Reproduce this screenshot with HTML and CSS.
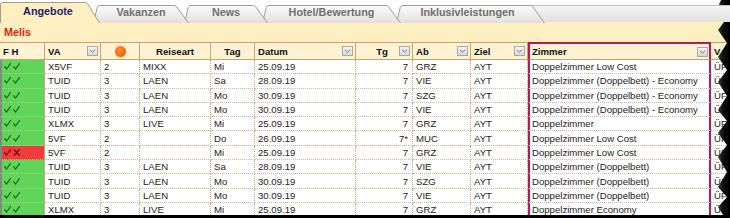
FILE: index.html
```html
<!DOCTYPE html>
<html lang="de">
<head>
<meta charset="utf-8">
<title>Angebote</title>
<link rel="stylesheet" href="styles.css">
</head>
<body>
<svg class="defs" width="0" height="0" aria-hidden="true">
  <defs>
    <linearGradient id="tabGrad" x1="0" y1="0" x2="0" y2="1">
      <stop offset="0" stop-color="#fbfbfb"/>
      <stop offset="1" stop-color="#e1e1e1"/>
    </linearGradient>
    <linearGradient id="tornGrad" x1="0" y1="0" x2="1" y2="0">
      <stop offset="0" stop-color="#3a3a3a"/>
      <stop offset="0.5" stop-color="#0c0c0c"/>
      <stop offset="1" stop-color="#000"/>
    </linearGradient>
  </defs>
</svg>
<div class="screen">
  <div class="tabs">
    <div class="tab active t-angebote">
      <svg class="shape" viewBox="0 0 100 22"><path d="M0.5 23 V4.5 Q0.5 2.5 2.5 2.5 H85 Q86.8 2.5 87.8 4 L99.5 23"/></svg>
      <span>Angebote</span>
    </div>
    <div class="tab t-vakanzen">
      <svg class="shape" viewBox="0 0 96 22"><path d="M0.5 23 L4.2 7.5 Q4.8 5.5 7 5.5 H81 Q82.8 5.5 83.8 7 L95.5 23"/></svg>
      <span>Vakanzen</span>
    </div>
    <div class="tab t-news">
      <svg class="shape" viewBox="0 0 84 22"><path d="M0.5 23 L4.2 7.5 Q4.8 5.5 7 5.5 H69 Q70.8 5.5 71.8 7 L83.5 23"/></svg>
      <span>News</span>
    </div>
    <div class="tab t-hotel">
      <svg class="shape" viewBox="0 0 139 22"><path d="M0.5 23 L4.2 7.5 Q4.8 5.5 7 5.5 H124 Q125.8 5.5 126.8 7 L138.5 23"/></svg>
      <span>Hotel/Bewertung</span>
    </div>
    <div class="tab t-inkl">
      <svg class="shape" viewBox="0 0 149 22"><path d="M0.5 23 L4.2 7.5 Q4.8 5.5 7 5.5 H134 Q135.8 5.5 136.8 7 L148.5 23"/></svg>
      <span>Inklusivleistungen</span>
    </div>
    <div class="tab-fill"></div>
  </div>

  <div class="band">Melis</div>

  <div class="grid">
    <div class="row head">
      <div class="cell">F H</div>
      <div class="cell"><span class="lbl">VA</span><span class="dd"><svg viewBox="0 0 7 4"><path d="M0.8 0.6 L3.5 3.2 L6.2 0.6"/></svg></span></div>
      <div class="cell center"><span class="dot"></span></div>
      <div class="cell center">Reiseart</div>
      <div class="cell center">Tag</div>
      <div class="cell"><span class="lbl">Datum</span><span class="dd"><svg viewBox="0 0 7 4"><path d="M0.8 0.6 L3.5 3.2 L6.2 0.6"/></svg></span></div>
      <div class="cell"><span class="lbl mid">Tg</span><span class="dd"><svg viewBox="0 0 7 4"><path d="M0.8 0.6 L3.5 3.2 L6.2 0.6"/></svg></span></div>
      <div class="cell"><span class="lbl">Ab</span><span class="dd"><svg viewBox="0 0 7 4"><path d="M0.8 0.6 L3.5 3.2 L6.2 0.6"/></svg></span></div>
      <div class="cell"><span class="lbl">Ziel</span><span class="dd"><svg viewBox="0 0 7 4"><path d="M0.8 0.6 L3.5 3.2 L6.2 0.6"/></svg></span></div>
      <div class="cell zimmer"><span class="lbl">Zimmer</span><span class="dd"><svg viewBox="0 0 7 4"><path d="M0.8 0.6 L3.5 3.2 L6.2 0.6"/></svg></span></div>
      <div class="cell">V</div>
    </div>

    <div class="row">
      <div class="cell st ok"><svg class="marks" viewBox="0 0 18 7"><path d="M0.6 3.6 L2.6 6 L6.4 0.6 M9.6 3.6 L11.6 6 L15.4 0.6"/></svg></div>
      <div class="cell">X5VF</div><div class="cell">2</div><div class="cell">MIXX</div><div class="cell">Mi</div><div class="cell">25.09.19</div><div class="cell num">7</div><div class="cell">GRZ</div><div class="cell">AYT</div><div class="cell zimmer">Doppelzimmer Low Cost</div><div class="cell">ÜF</div>
    </div>
    <div class="row">
      <div class="cell st ok"><svg class="marks" viewBox="0 0 18 7"><path d="M0.6 3.6 L2.6 6 L6.4 0.6 M9.6 3.6 L11.6 6 L15.4 0.6"/></svg></div>
      <div class="cell">TUID</div><div class="cell">3</div><div class="cell">LAEN</div><div class="cell">Sa</div><div class="cell">28.09.19</div><div class="cell num">7</div><div class="cell">VIE</div><div class="cell">AYT</div><div class="cell zimmer">Doppelzimmer (Doppelbett) - Economy</div><div class="cell">ÜF</div>
    </div>
    <div class="row">
      <div class="cell st ok"><svg class="marks" viewBox="0 0 18 7"><path d="M0.6 3.6 L2.6 6 L6.4 0.6 M9.6 3.6 L11.6 6 L15.4 0.6"/></svg></div>
      <div class="cell">TUID</div><div class="cell">3</div><div class="cell">LAEN</div><div class="cell">Mo</div><div class="cell">30.09.19</div><div class="cell num">7</div><div class="cell">SZG</div><div class="cell">AYT</div><div class="cell zimmer">Doppelzimmer (Doppelbett) - Economy</div><div class="cell">ÜF</div>
    </div>
    <div class="row">
      <div class="cell st ok"><svg class="marks" viewBox="0 0 18 7"><path d="M0.6 3.6 L2.6 6 L6.4 0.6 M9.6 3.6 L11.6 6 L15.4 0.6"/></svg></div>
      <div class="cell">TUID</div><div class="cell">3</div><div class="cell">LAEN</div><div class="cell">Mo</div><div class="cell">30.09.19</div><div class="cell num">7</div><div class="cell">VIE</div><div class="cell">AYT</div><div class="cell zimmer">Doppelzimmer (Doppelbett) - Economy</div><div class="cell">ÜF</div>
    </div>
    <div class="row">
      <div class="cell st ok"><svg class="marks" viewBox="0 0 18 7"><path d="M0.6 3.6 L2.6 6 L6.4 0.6 M9.6 3.6 L11.6 6 L15.4 0.6"/></svg></div>
      <div class="cell">XLMX</div><div class="cell">3</div><div class="cell">LIVE</div><div class="cell">Mi</div><div class="cell">25.09.19</div><div class="cell num">7</div><div class="cell">GRZ</div><div class="cell">AYT</div><div class="cell zimmer">Doppelzimmer</div><div class="cell">ÜF</div>
    </div>
    <div class="row">
      <div class="cell st ok"><svg class="marks" viewBox="0 0 18 7"><path d="M0.6 3.6 L2.6 6 L6.4 0.6 M9.6 3.6 L11.6 6 L15.4 0.6"/></svg></div>
      <div class="cell">5VF</div><div class="cell">2</div><div class="cell"></div><div class="cell">Do</div><div class="cell">26.09.19</div><div class="cell num">7*</div><div class="cell">MUC</div><div class="cell">AYT</div><div class="cell zimmer">Doppelzimmer Low Cost</div><div class="cell">ÜF</div>
    </div>
    <div class="row">
      <div class="cell st bad"><svg class="marks" viewBox="0 0 18 7"><path d="M0.6 3.6 L2.6 6 L6.4 0.6"/><path class="x" d="M10.2 0.8 L15.2 6.2 M15.2 0.8 L10.2 6.2"/></svg></div>
      <div class="cell">5VF</div><div class="cell">2</div><div class="cell"></div><div class="cell">Mi</div><div class="cell">25.09.19</div><div class="cell num">7</div><div class="cell">GRZ</div><div class="cell">AYT</div><div class="cell zimmer">Doppelzimmer Low Cost</div><div class="cell">ÜF</div>
    </div>
    <div class="row">
      <div class="cell st ok"><svg class="marks" viewBox="0 0 18 7"><path d="M0.6 3.6 L2.6 6 L6.4 0.6 M9.6 3.6 L11.6 6 L15.4 0.6"/></svg></div>
      <div class="cell">TUID</div><div class="cell">3</div><div class="cell">LAEN</div><div class="cell">Sa</div><div class="cell">28.09.19</div><div class="cell num">7</div><div class="cell">VIE</div><div class="cell">AYT</div><div class="cell zimmer">Doppelzimmer (Doppelbett)</div><div class="cell">ÜF</div>
    </div>
    <div class="row">
      <div class="cell st ok"><svg class="marks" viewBox="0 0 18 7"><path d="M0.6 3.6 L2.6 6 L6.4 0.6 M9.6 3.6 L11.6 6 L15.4 0.6"/></svg></div>
      <div class="cell">TUID</div><div class="cell">3</div><div class="cell">LAEN</div><div class="cell">Mo</div><div class="cell">30.09.19</div><div class="cell num">7</div><div class="cell">SZG</div><div class="cell">AYT</div><div class="cell zimmer">Doppelzimmer (Doppelbett)</div><div class="cell">ÜF</div>
    </div>
    <div class="row">
      <div class="cell st ok"><svg class="marks" viewBox="0 0 18 7"><path d="M0.6 3.6 L2.6 6 L6.4 0.6 M9.6 3.6 L11.6 6 L15.4 0.6"/></svg></div>
      <div class="cell">TUID</div><div class="cell">3</div><div class="cell">LAEN</div><div class="cell">Mo</div><div class="cell">30.09.19</div><div class="cell num">7</div><div class="cell">VIE</div><div class="cell">AYT</div><div class="cell zimmer">Doppelzimmer (Doppelbett)</div><div class="cell">ÜF</div>
    </div>
    <div class="row last">
      <div class="cell st ok"><svg class="marks" viewBox="0 0 18 7"><path d="M0.6 3.6 L2.6 6 L6.4 0.6 M9.6 3.6 L11.6 6 L15.4 0.6"/></svg></div>
      <div class="cell">XLMX</div><div class="cell">3</div><div class="cell">LIVE</div><div class="cell">Mi</div><div class="cell">25.09.19</div><div class="cell num">7</div><div class="cell">GRZ</div><div class="cell">AYT</div><div class="cell zimmer">Doppelzimmer Economy</div><div class="cell">ÜF</div>
    </div>
  </div>

  <svg class="torn-right" viewBox="0 0 14 218" preserveAspectRatio="none" aria-hidden="true">
    <path d="M14 0 L5 0 L1.5 8 L11 18 L2 30 L11 43 L2 57 L11 70 L2 82 L11 96 L2 110 L11 121 L2 133 L11 145 L2 157 L11 172 L2 187 L11 197 L2 207 L9 218 L14 218 Z"/>
  </svg>
  <div class="torn-bottom"></div>
</div>
</body>
</html>
```

FILE: styles.css
```css
html, body {
  margin: 0;
  padding: 0;
  background: #ffffff;
}

body {
  font-family: "Liberation Sans", Arial, sans-serif;
  color: #1c1c1c;
}

.defs {
  position: absolute;
  width: 0;
  height: 0;
}

.screen {
  position: relative;
  width: 730px;
  height: 218px;
  overflow: hidden;
  background: #ffffff;
}

/* ---------- tabs ---------- */
.tabs {
  display: flex;
  height: 22px;
}

.tab {
  position: relative;
  flex: none;
  display: flex;
  align-items: center;
  justify-content: center;
  font-weight: bold;
  font-size: 10.8px;
  color: #6e6e6e;
  padding-top: 2px;
  box-sizing: border-box;
}

.tab .shape {
  position: absolute;
  left: 0;
  top: 0;
  width: 100%;
  height: 100%;
  overflow: visible;
}

.tab .shape path {
  fill: url(#tabGrad);
  stroke: #9d9d9d;
  stroke-width: 1;
}

.tab span {
  position: relative;
}

.tab.active {
  color: #1d1d6b;
  padding-top: 0;
}

.tab.active .shape path {
  fill: #fdefbf;
  stroke: #a49c88;
}

.t-angebote { width: 100px; z-index: 6; padding-right: 4px; }
.t-vakanzen { width: 96px; margin-left: -7px; z-index: 5; }
.t-news { width: 84px; margin-left: -5px; z-index: 4; }
.t-hotel { width: 139px; margin-left: -6px; z-index: 3; }
.t-inkl { width: 149px; margin-left: -5px; z-index: 2; padding-right: 6px; }

.tab-fill {
  flex: 1;
  margin-left: -14px;
  margin-top: 5px;
  border-top: 1px solid #c2c2c2;
  background: linear-gradient(#f4f4f4, #e1e1e1);
  z-index: 1;
}

/* ---------- band ---------- */
.band {
  height: 20px;
  background: #fdefbf;
  display: flex;
  align-items: center;
  padding-left: 4px;
  color: #e2230f;
  font-weight: bold;
  font-size: 10.8px;
}

/* ---------- grid ---------- */
.row {
  display: grid;
  grid-template-columns: 45px 56px 39px 71px 44px 101px 57px 58px 57px 183px 1fr;
  height: 14.3px;
  background: #ffffff;
  font-size: 9.6px;
}

.cell {
  box-sizing: border-box;
  display: flex;
  align-items: center;
  padding-left: 3px;
  white-space: nowrap;
  overflow: hidden;
  border-right: 1px dotted #c3ab80;
  border-bottom: 1px dotted #cdbb98;
}

.cell.num {
  justify-content: flex-end;
  padding-left: 0;
  padding-right: 4px;
}

.cell.center {
  justify-content: center;
  padding-left: 0;
}

.cell.zimmer {
  border-left: 2px solid #b3185c;
  border-right: 2px solid #b3185c;
  padding-left: 2px;
}

.last .cell.zimmer {
  border-bottom: 2px solid #b3185c;
}

.head {
  height: 18px;
  background: #fdf3d3;
  font-weight: bold;
  color: #111111;
}

.head .cell {
  border-top: 1px solid #c9a46c;
  border-bottom: 1px solid #c9a46c;
  border-right: 1px solid #c9a46c;
}

.head .cell.zimmer {
  border-top: 2px solid #b3185c;
  border-left: 2px solid #b3185c;
  border-right: 2px solid #b3185c;
}

.lbl {
  flex: 1;
}

.lbl.mid {
  text-align: center;
  padding-left: 6px;
}

.dd {
  flex: none;
  width: 11px;
  height: 10px;
  box-sizing: border-box;
  margin-right: 2px;
  border: 1px solid #a8a8a8;
  background: linear-gradient(#f5f5f5, #d7d7d7);
  display: flex;
  align-items: center;
  justify-content: center;
}

.dd svg {
  width: 7px;
  height: 4px;
}

.dd path {
  fill: none;
  stroke: #6a6a6a;
  stroke-width: 0.9;
}

.head .zimmer .dd {
  margin-right: 1px;
}

.dot {
  width: 11px;
  height: 11px;
  border-radius: 50%;
  background: radial-gradient(circle at 40% 35%, #ff8b3a, #ff6200 70%);
}

/* status column */
.cell.st {
  border-left: 2px solid #7c8c7c;
  border-right: 1px solid #c3ab80;
  padding-left: 2px;
}

.cell.ok {
  background: #5fd65a;
}

.cell.bad {
  background: #f03c3c;
}

.marks {
  width: 18px;
  height: 7px;
  overflow: visible;
}

.marks path {
  fill: none;
  stroke-width: 1.2;
  stroke-linecap: round;
  stroke-linejoin: round;
}

.ok .marks path {
  stroke: #1f641f;
}

.bad .marks path {
  stroke: #7a1010;
}

.bad .marks path.x {
  stroke: #5a0c0c;
}

/* torn screenshot edges */
.torn-right {
  position: absolute;
  right: 0;
  top: 0;
  width: 14px;
  height: 218px;
}

.torn-right path {
  fill: url(#tornGrad);
}

.torn-bottom {
  position: absolute;
  left: 0;
  right: 0;
  bottom: 0;
  height: 3px;
  background: #000000;
}
```
